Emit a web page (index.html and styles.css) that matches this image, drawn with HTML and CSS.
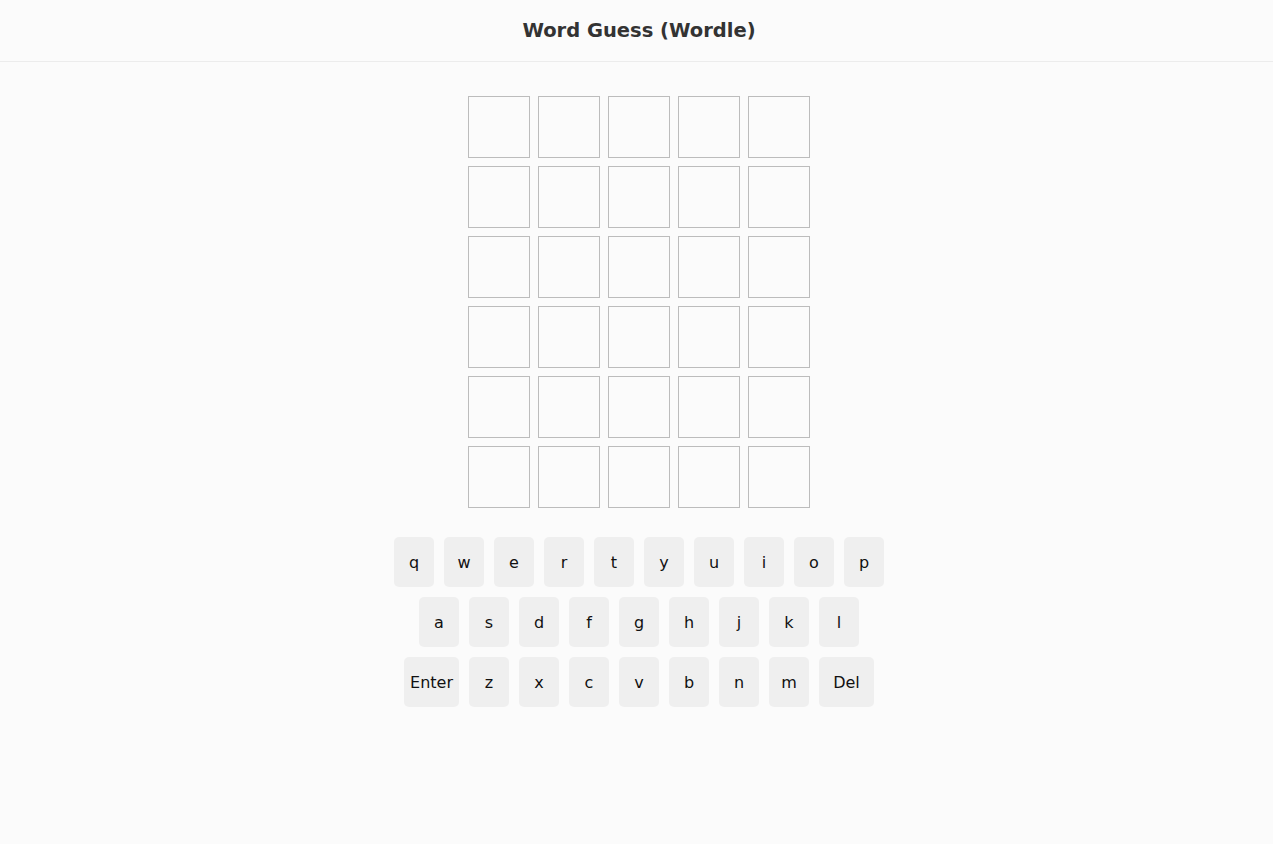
FILE: index.html
```html
<!DOCTYPE html>
<html lang="en">
<head>
<meta charset="utf-8">
<title>Word Guess (Wordle)</title>
<link rel="stylesheet" href="styles.css">
</head>
<body>
<div class="app">
  <header class="header"><h1 class="title">Word Guess (Wordle)</h1></header>
  <main class="main">
    <div class="board">
      <div class="tile"></div><div class="tile"></div><div class="tile"></div><div class="tile"></div><div class="tile"></div>
      <div class="tile"></div><div class="tile"></div><div class="tile"></div><div class="tile"></div><div class="tile"></div>
      <div class="tile"></div><div class="tile"></div><div class="tile"></div><div class="tile"></div><div class="tile"></div>
      <div class="tile"></div><div class="tile"></div><div class="tile"></div><div class="tile"></div><div class="tile"></div>
      <div class="tile"></div><div class="tile"></div><div class="tile"></div><div class="tile"></div><div class="tile"></div>
      <div class="tile"></div><div class="tile"></div><div class="tile"></div><div class="tile"></div><div class="tile"></div>
    </div>
    <div class="keyboard">
      <div class="krow">
        <button class="key">q</button><button class="key">w</button><button class="key">e</button><button class="key">r</button><button class="key">t</button><button class="key">y</button><button class="key">u</button><button class="key">i</button><button class="key">o</button><button class="key">p</button>
      </div>
      <div class="krow">
        <button class="key">a</button><button class="key">s</button><button class="key">d</button><button class="key">f</button><button class="key">g</button><button class="key">h</button><button class="key">j</button><button class="key">k</button><button class="key">l</button>
      </div>
      <div class="krow">
        <button class="key wide">Enter</button><button class="key">z</button><button class="key">x</button><button class="key">c</button><button class="key">v</button><button class="key">b</button><button class="key">n</button><button class="key">m</button><button class="key wide">Del</button>
      </div>
    </div>
  </main>
</div>
</body>
</html>
```

FILE: styles.css
```css
html, body {
  margin: 0;
  padding: 0;
  background: #fbfbfb;
  font-family: "DejaVu Sans", Verdana, sans-serif;
  color: #111;
}
.app {
  padding-left: 5px;
  min-height: 844px;
  box-sizing: border-box;
}
.header {
  height: 62px;
  border-bottom: 1px solid #ececec;
  display: flex;
  align-items: center;
  justify-content: center;
  margin-left: -5px;
  padding-left: 5px;
  padding-bottom: 1px;
  box-sizing: border-box;
}
.title {
  margin: 0;
  font-size: 19.5px;
  font-weight: bold;
  color: #333;
}
.main {
  display: flex;
  flex-direction: column;
  align-items: center;
  padding-top: 34px;
}
.board {
  display: grid;
  grid-template-columns: repeat(5, 62px);
  grid-auto-rows: 62px;
  gap: 8px;
}
.tile {
  border: 1px solid #bcbcbc;
  box-sizing: border-box;
}
.keyboard {
  margin-top: 29px;
  display: flex;
  flex-direction: column;
  align-items: center;
  gap: 10px;
}
.krow {
  display: flex;
  gap: 10px;
}
.key {
  width: 40px;
  height: 50px;
  border: none;
  border-radius: 5px;
  background: #efefef;
  font-family: "DejaVu Sans", Verdana, sans-serif;
  font-size: 16px;
  color: #111;
  padding: 0;
  display: flex;
  align-items: center;
  justify-content: center;
}
.key.wide {
  width: 55px;
}
```
